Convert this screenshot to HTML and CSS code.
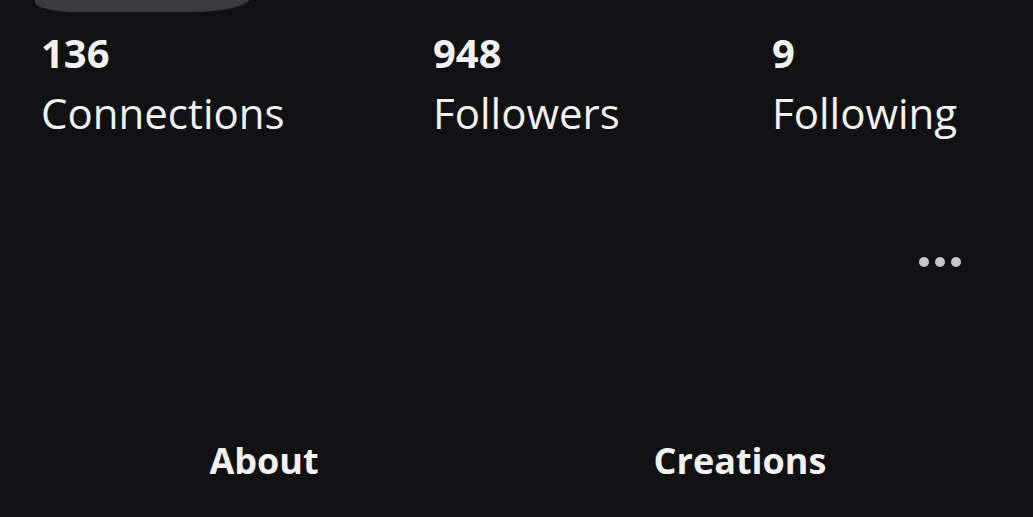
FILE: index.html
```html
<!DOCTYPE html>
<html>
<head>
<meta charset="utf-8">
<link rel="stylesheet" href="styles.css">
</head>
<body>
<div class="page">
  <div class="redact"></div>
  <div class="stats">
    <div class="stat"><div class="num">136</div><div class="label">Connections</div></div>
    <div class="stat"><div class="num">948</div><div class="label">Followers</div></div>
    <div class="stat"><div class="num">9</div><div class="label">Following</div></div>
  </div>
  <div class="more-row">
    <div class="more"><span class="dot"></span><span class="dot"></span><span class="dot"></span></div>
  </div>
  <div class="tabs">
    <div class="tab">About</div>
    <div class="tab">Creations</div>
  </div>
</div>
</body>
</html>
```
FILE: styles.css
```css
html, body {
  margin: 0;
  padding: 0;
  background: #111113;
  width: 1033px;
  height: 517px;
  overflow: hidden;
}
.page {
  position: relative;
  width: 1033px;
  height: 517px;
  font-family: "Open Sans", "Noto Sans", sans-serif;
  color: #f2f2f2;
}
.redact {
  position: absolute;
  left: 35px;
  top: -20px;
  width: 215px;
  height: 32px;
  background: #3b3b3d;
  border-radius: 0 0 60px 40px / 0 0 14px 10px;
}
.stats {
  display: grid;
  grid-template-columns: 392px 339px 1fr;
  padding: 30px 0 0 41px;
}
.num {
  font-size: 40px;
  font-weight: 700;
  line-height: 46px;
}
.label {
  margin-top: 8px;
  font-size: 42px;
  font-weight: 400;
  line-height: 58px;
}
.more-row {
  display: flex;
  justify-content: flex-end;
  padding: 115px 72px 0 0;
}
.more {
  display: flex;
  gap: 6px;
}
.dot {
  width: 10px;
  height: 10px;
  border-radius: 50%;
  background: #c4c4c6;
}
.tabs {
  display: grid;
  grid-template-columns: 1fr 1fr;
  margin: 169px 55px 0 26px;
}
.tab {
  text-align: center;
  font-size: 36px;
  font-weight: 700;
}
```
